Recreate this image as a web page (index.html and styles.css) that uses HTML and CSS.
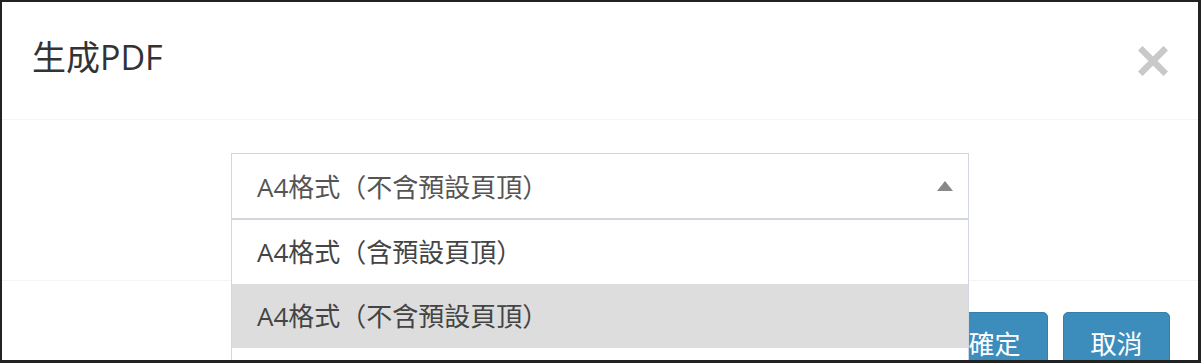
FILE: index.html
```html
<!DOCTYPE html>
<html lang="zh-Hant">
<head>
  <meta charset="UTF-8" />
  <meta name="viewport" content="width=device-width, initial-scale=1.0"/>
  <title>生成PDF</title>
  <link rel="stylesheet" href="styles.css">
</head>
<body>
  <div class="modal">
    <div class="modal-header">
      <h4 class="modal-title">生成PDF</h4>
      <span class="close">
        <svg width="30" height="30" viewBox="0 0 30 30">
          <path d="M4.5 4.5 L25.5 25.5 M25.5 4.5 L4.5 25.5" stroke="#c9c9c9" stroke-width="6.5" stroke-linecap="square" fill="none"/>
        </svg>
      </span>
    </div>
    <div class="modal-body">
      <div class="select-wrap">
        <div class="select">
          <span>A4格式（不含預設頁頂）</span>
          <span class="caret"></span>
        </div>
        <ul class="dropdown">
          <li>A4格式（含預設頁頂）</li>
          <li class="active">A4格式（不含預設頁頂）</li>
          <li></li>
        </ul>
      </div>
    </div>
    <div class="modal-footer">
      <button type="button" class="btn">確定</button>
      <button type="button" class="btn">取消</button>
    </div>
  </div>
</body>
</html>
```

FILE: styles.css
```css
* {
  box-sizing: border-box;
}

body {
  margin: 0;
  padding: 0;
  font-family: 'Open Sans', 'Noto Sans CJK TC', sans-serif;
  background: #fff;
}

.modal {
  width: 1201px;
  height: 363px;
  border: 2px solid #222;
  border-right-width: 3px;
  border-bottom-width: 3px;
  overflow: hidden;
  background: #fff;
}

.modal-header {
  height: 118px;
  padding: 20px 30px 0 30px;
  display: flex;
  justify-content: space-between;
  align-items: flex-start;
  border-bottom: 1px solid #f4f4f4;
}

.modal-title {
  margin: 0;
  font-size: 34px;
  font-weight: normal;
  line-height: 70px;
  color: #333;
}

.close {
  display: block;
  margin-top: 24px;
  width: 30px;
  height: 30px;
}

.close svg {
  display: block;
}

.modal-body {
  height: 160px;
  padding-top: 33px;
  display: flex;
  justify-content: center;
  align-items: flex-start;
}

.select-wrap {
  position: relative;
  width: 738px;
}

.select {
  height: 66px;
  border: 1px solid #d2d6de;
  padding: 0 25px;
  display: flex;
  align-items: center;
  justify-content: space-between;
  font-size: 26px;
  color: #555;
}

.caret {
  width: 0;
  height: 0;
  border-left: 8.5px solid transparent;
  border-right: 8.5px solid transparent;
  border-bottom: 10px solid #888;
  margin-right: -10px;
}

.dropdown {
  position: absolute;
  top: 100%;
  left: 0;
  width: 100%;
  margin: 0;
  padding: 0;
  list-style: none;
  background: #fff;
  border: 1px solid #d2d6de;
  border-top: 1px solid #d2d6de;
  z-index: 10;
}

.dropdown li {
  height: 64px;
  line-height: 64px;
  padding: 0 25px;
  font-size: 26px;
  color: #444;
}

.dropdown li.active {
  background: #ddd;
}

.modal-footer {
  border-top: 1px solid #f4f4f4;
  padding: 31px 28px 0 0;
  display: flex;
  justify-content: flex-end;
  gap: 15px;
}

.btn {
  width: 107px;
  height: 64px;
  padding: 0;
  border: 1px solid #367fa9;
  border-radius: 5px;
  background: #3c8dbc;
  color: #fff;
  font-family: 'Open Sans', 'Noto Sans CJK TC', sans-serif;
  font-size: 26px;
  line-height: 60px;
}
```
